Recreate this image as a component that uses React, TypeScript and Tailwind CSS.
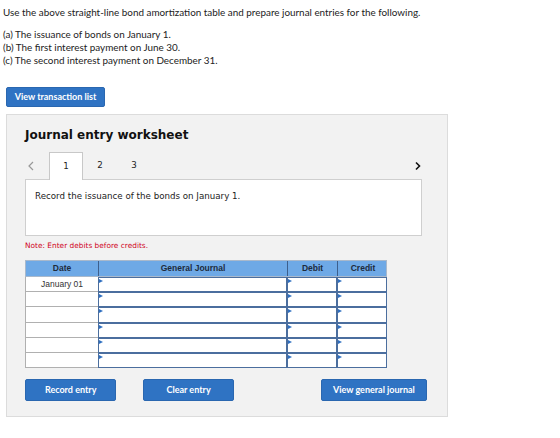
import React from 'react';

const rows = ['January 01', '', '', '', '', ''];

const Marker = () => (
  <span className="absolute left-0 top-[1px] h-0 w-0 border-y-[2px] border-l-[4px] border-y-transparent border-l-[#2f6fc0]" />
);

const BlueButton = ({ label, className }: { label: string; className: string }) => (
  <button
    className={`flex items-center justify-center rounded-[2px] border border-[#2a67b0] bg-[#2f73c3] font-['Lato','Open_Sans',sans-serif] text-[9px] font-bold text-white ${className}`}
  >
    {label}
  </button>
);

export default function App() {
  return (
    <div className="min-h-screen bg-white px-[3px] pt-[6px] font-['Lato','Open_Sans',sans-serif] text-[#222]">
      <p className="text-[9.9px] leading-[13px]">Use the above straight-line bond amortization table and prepare journal entries for the following.</p>
      <div className="mt-[9px] text-[9.9px] leading-[13px]">
        <p>(a) The issuance of bonds on January 1.</p>
        <p>(b) The first interest payment on June 30.</p>
        <p>(c) The second interest payment on December 31.</p>
      </div>

      <div className="ml-[3px] mt-[20px]">
        <BlueButton label="View transaction list" className="h-[20px] w-[99px]" />
      </div>

      {/* worksheet panel */}
      <div className="ml-[3px] mt-[7px] w-[442px] border border-[#dcdcdc] bg-[#f2f2f2] pb-[15px] pl-[18px] pr-[20px] pt-[12px]">
        <h2 className="font-['DejaVu_Sans','Verdana',sans-serif] text-[12px] font-bold leading-[16px] text-[#111]">
          Journal entry worksheet
        </h2>

        <div className="font-['DejaVu_Sans','Verdana',sans-serif]">
          <div className="mt-[9px] flex h-[27px] items-end">
            <div className="flex h-[27px] w-[24px] items-center pl-[3px] text-[#999]">
              <svg width="6" height="10" viewBox="0 0 6 10"><path d="M5 1 1 5l4 4" fill="none" stroke="currentColor" strokeWidth="1.2" /></svg>
            </div>
            <div className="relative z-10 -mb-px flex h-[28px] w-[34px] items-center justify-center border border-b-0 border-[#c8c8c8] bg-white text-[8.7px] text-[#222]">1</div>
            <div className="flex h-[27px] w-[34px] items-center justify-center text-[8.7px] text-[#222]">2</div>
            <div className="flex h-[27px] w-[34px] items-center justify-center text-[8.7px] text-[#222]">3</div>
            <div className="flex-1" />
            <div className="flex h-[27px] w-[12px] items-center text-[#111]">
              <svg width="6" height="10" viewBox="0 0 6 10"><path d="M1 1.5 4.5 5 1 8.5" fill="none" stroke="currentColor" strokeWidth="1.6" /></svg>
            </div>
          </div>
          <div className="h-[57px] w-[397px] border border-[#cfcfcf] bg-white px-[9px] pt-[11px] text-[8.7px] leading-[10px] text-[#222]">
            Record the issuance of the bonds on January 1.
          </div>
          <p className="mt-[5px] text-[7.4px] leading-[10px] text-[#d0021b]">Note: Enter debits before credits.</p>
        </div>

        {/* journal table */}
        <div className="mt-[9px] w-[362px] font-['Liberation_Sans','Arial',sans-serif]">
          <div className="grid h-[17px] grid-cols-[73px_189px_50px_50px] border border-[#a9b9cc] bg-[#6ea9e6] text-[8.5px] font-bold text-[#1d2b3c]">
            <div className="flex items-center justify-center border-r border-[#3d5f8c]">Date</div>
            <div className="flex items-center justify-center border-r border-[#3d5f8c]">General Journal</div>
            <div className="flex items-center justify-center border-r border-[#3d5f8c]">Debit</div>
            <div className="flex items-center justify-center">Credit</div>
          </div>
          {rows.map((d, i) => (
            <div key={i} className="grid h-[15.2px] grid-cols-[73px_189px_50px_50px]">
              <div className="flex items-center justify-center border-b border-l border-[#b0b0b0] bg-white text-[8.5px] text-[#333]">{d}</div>
              <div className="relative border border-[#4b6e9e] bg-white"><Marker /></div>
              <div className="relative border border-[#4b6e9e] bg-white"><Marker /></div>
              <div className="relative border border-[#4b6e9e] bg-white"><Marker /></div>
            </div>
          ))}
        </div>

        <div className="mt-[11px] flex items-center">
          <BlueButton label="Record entry" className="h-[22px] w-[92px]" />
          <BlueButton label="Clear entry" className="ml-[27px] h-[22px] w-[91px]" />
          <BlueButton label="View general journal" className="ml-[87px] h-[22px] w-[107px]" />
        </div>
      </div>
    </div>
  );
}
